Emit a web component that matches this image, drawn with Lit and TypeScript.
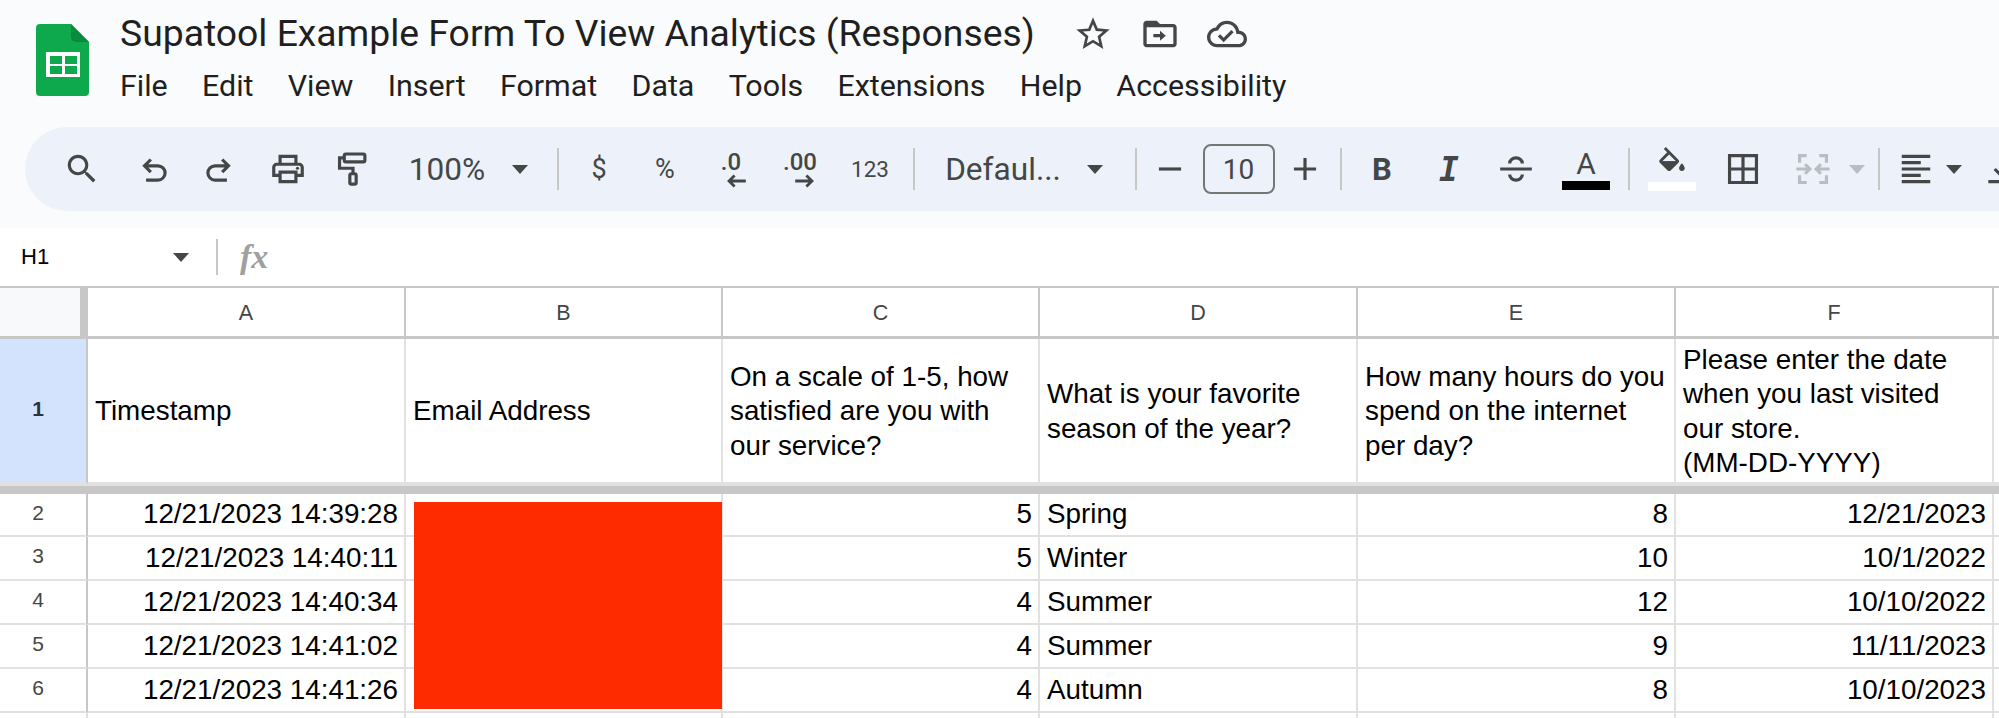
import { LitElement, html, css, svg } from 'lit';
import { customElement } from 'lit/decorators.js';

const icon = (body: unknown, cls = '') =>
  html`<svg class="icon ${cls}" viewBox="0 0 24 24">${body}</svg>`;

const ICONS: Record<string, unknown> = {
  search: svg`<path fill="currentColor" d="M15.5 14h-.79l-.28-.27C15.41 12.59 16 11.11 16 9.5 16 5.91 13.09 3 9.5 3S3 5.91 3 9.5 5.91 16 9.5 16c1.61 0 3.09-.59 4.23-1.57l.27.28v.79l5 4.99L20.49 19l-4.99-5zm-6 0C7.01 14 5 11.99 5 9.5S7.01 5 9.5 5 14 7.01 14 9.5 11.99 14 9.5 14z"/>`,
  undo: svg`<path class="st" d="M6 10h8.5a4.5 4.5 0 0 1 0 9H7M10 6l-4 4 4 4"/>`,
  redo: svg`<path class="st" d="M18 10H9.5a4.5 4.5 0 0 0 0 9H17M14 6l4 4-4 4"/>`,
  print: svg`<path fill="currentColor" d="M19 8h-1V3H6v5H5c-1.66 0-3 1.34-3 3v6h4v4h12v-4h4v-6c0-1.66-1.34-3-3-3zM8 5h8v3H8V5zm8 12v2H8v-4h8v2zm2-2v-2H6v2H4v-4c0-.55.45-1 1-1h14c.55 0 1 .45 1 1v4h-2z"/><circle fill="currentColor" cx="18" cy="11.5" r="1"/>`,
  paint: svg`<rect class="st" x="6.5" y="2.5" width="13" height="5" rx="1"/><path class="st" d="M6.5 5H3.5v6.5H12V15"/><rect class="st" x="10" y="15" width="4" height="6.5" rx="1"/>`,
  borders: svg`<path class="st" d="M3.500 3.500h17v17h-17zM12 3.500v17M3.500 12h17"/>`,
  merge: svg`<path class="st" d="M8 3.500H3.500V8M16 3.500h4.500V8M8 20.500H3.500V16M16 20.500h4.500V16M1.500 12H10M7 9l3 3-3 3M22.500 12H14M17 9l-3 3 3 3"/>`,
  align: svg`<path class="st" d="M3 4h18M3 8h12M3 12h18M3 16h12M3 20h18"/>`,
  valign: svg`<path class="st" d="M4 20h16M12 6v10M8 12l4 4 4-4"/>`,
  strike: svg`<path class="st" d="M2 12h20M8 8.500a4 3.500 0 0 1 8 0M8 15.500a4 3.500 0 0 0 8 0"/>`,
  fill: svg`<path fill="currentColor" d="M16.56 8.94L7.62 0 6.21 1.41l2.38 2.38-5.15 5.15c-.59.59-.59 1.54 0 2.12l5.500 5.500c.29.29.68.44 1.06.44s.77-.15 1.06-.44l5.500-5.500c.59-.58.59-1.53 0-2.12zM5.210 10L10 5.210 14.790 10H5.210zM19 11.500s-2 2.170-2 3.500c0 1.100.9 2 2 2s2-.9 2-2c0-1.330-2-3.500-2-3.500z"/><path fill="currentColor" d="M5 10h10l-5 5z"/>`,
  minus: svg`<path fill="currentColor" d="M5 11h14v2H5z"/>`,
  plus: svg`<path fill="currentColor" d="M19 13h-6v6h-2v-6H5v-2h6V5h2v6h6z"/>`,
  star: svg`<path fill="currentColor" d="M22 9.240l-7.190-.62L12 2 9.190 8.630 2 9.240l5.460 4.730L5.820 21 12 17.270 18.180 21l-1.630-7.030L22 9.240zM12 15.400l-3.760 2.270 1-4.280-3.320-2.880 4.380-.38L12 6.100l1.710 4.040 4.380.38-3.320 2.880 1 4.280L12 15.400z"/>`,
  folder: svg`<path fill="currentColor" d="M20 6h-8l-2-2H4c-1.100 0-2 .9-2 2v12c0 1.100.9 2 2 2h16c1.100 0 2-.9 2-2V8c0-1.100-.9-2-2-2zm0 12H4V8h16v10z"/><path fill="currentColor" d="M12 10l3.500 3-3.500 3v-2H8v-2h4z"/>`,
  cloud: svg`<path fill="currentColor" d="M19.350 10.040C18.670 6.590 15.640 4 12 4 9.110 4 6.600 5.640 5.350 8.040 2.340 8.360 0 10.910 0 14c0 3.310 2.690 6 6 6h13c2.760 0 5-2.240 5-5 0-2.640-2.050-4.780-4.650-4.960zM19 18H6c-2.210 0-4-1.790-4-4 0-2.050 1.530-3.760 3.560-3.970l1.070-.11.5-.95C8.080 7.140 9.940 6 12 6c2.620 0 4.880 1.860 5.390 4.430l.3 1.500 1.530.11c1.560.1 2.780 1.410 2.780 2.960 0 1.650-1.350 3-3 3zm-9-3.820l-2.090-2.090L6.500 13.500 10 17l6.010-6.010-1.410-1.410z"/>`,
};

const caret = (off = false) => html`<span class="caret ${off ? 'off' : ''}"></span>`;

// c = horizontal centre of the item, w = its width; gaps between them are derived
type Tool = { c: number; w: number; view: unknown };

const rawTools: Tool[] = [
  { c: 82, w: 40, view: icon(ICONS.search) },
  { c: 154, w: 40, view: icon(ICONS.undo) },
  { c: 219, w: 40, view: icon(ICONS.redo) },
  { c: 288, w: 40, view: icon(ICONS.print) },
  { c: 353, w: 40, view: icon(ICONS.paint) },
  { c: 447, w: 90, view: html`<span class="lbl">100%</span>` },
  { c: 520, w: 20, view: caret() },
  { c: 558, w: 2, view: html`<span class="sep"></span>` },
  { c: 599, w: 30, view: html`<span class="lbl sm">$</span>` },
  { c: 665, w: 30, view: html`<span class="lbl sm">%</span>` },
  { c: 731, w: 40, view: html`<span class="dec"><b>.0</b><svg viewBox="0 0 16 10"><path class="st" d="M15 5H3M7 1L3 5l4 4"/></svg></span>` },
  { c: 800, w: 44, view: html`<span class="dec"><b>.00</b><svg viewBox="0 0 16 10"><path class="st" d="M1 5h12M9 1l4 4-4 4"/></svg></span>` },
  { c: 870, w: 44, view: html`<span class="lbl xs">123</span>` },
  { c: 914, w: 2, view: html`<span class="sep"></span>` },
  { c: 1003, w: 120, view: html`<span class="lbl">Defaul...</span>` },
  { c: 1095, w: 20, view: caret() },
  { c: 1136, w: 2, view: html`<span class="sep"></span>` },
  { c: 1170, w: 30, view: icon(ICONS.minus) },
  { c: 1238.500, w: 72, view: html`<span class="sizebox">10</span>` },
  { c: 1305, w: 30, view: icon(ICONS.plus) },
  { c: 1341, w: 2, view: html`<span class="sep"></span>` },
  { c: 1382, w: 30, view: html`<span class="bold">B</span>` },
  { c: 1449, w: 30, view: html`<span class="ital">I</span>` },
  { c: 1516, w: 40, view: icon(ICONS.strike) },
  { c: 1586, w: 48, view: html`<span class="swatch"><span class="a">A</span><i class="ink"></i></span>` },
  { c: 1629, w: 2, view: html`<span class="sep"></span>` },
  { c: 1672, w: 48, view: html`<span class="swatch">${icon(ICONS.fill, 'small')}<i class="paper"></i></span>` },
  { c: 1743, w: 40, view: icon(ICONS.borders) },
  { c: 1813, w: 40, view: icon(ICONS.merge, 'off') },
  { c: 1857, w: 20, view: caret(true) },
  { c: 1879, w: 2, view: html`<span class="sep"></span>` },
  { c: 1916, w: 40, view: icon(ICONS.align) },
  { c: 1954, w: 20, view: caret() },
  { c: 2001, w: 40, view: icon(ICONS.valign) },
];

let edge = 25;
const tools = rawTools.map((t) => {
  const ml = t.c - t.w / 2 - edge;
  edge = t.c + t.w / 2;
  return { ...t, ml };
});

const menus = ['File', 'Edit', 'View', 'Insert', 'Format', 'Data', 'Tools', 'Extensions', 'Help', 'Accessibility'];
const cols = ['A', 'B', 'C', 'D', 'E', 'F', ''];

const rows = [
  ['2', '12/21/2023 14:39:28', '5', 'Spring', '8', '12/21/2023'],
  ['3', '12/21/2023 14:40:11', '5', 'Winter', '10', '10/1/2022'],
  ['4', '12/21/2023 14:40:34', '4', 'Summer', '12', '10/10/2022'],
  ['5', '12/21/2023 14:41:02', '4', 'Summer', '9', '11/11/2023'],
  ['6', '12/21/2023 14:41:26', '4', 'Autumn', '8', '10/10/2023'],
];

@customElement('app-root')
export class AppRoot extends LitElement {
  static styles = css`
    :host {
      display: block;
      width: 1999px;
      height: 718px;
      overflow: hidden;
      background: #fff;
      font-family: 'Liberation Sans', Arial, sans-serif;
      color: #000;
    }
    .st { fill: none; stroke: currentColor; stroke-width: 2; }
    .chrome { background: #f9fbfd; height: 228px; overflow: hidden; }
    .head { display: flex; height: 127px; padding-left: 36px; box-sizing: border-box; }
    .logo { width: 53px; height: 72px; margin-top: 24px; flex: none; }
    .titles { margin-left: 31px; }
    .titlebar { display: flex; align-items: center; height: 67px; }
    .title { font: 400 37.300px/67px Roboto, sans-serif; color: #1f1f1f; white-space: nowrap; width: 953px; }
    .badges { display: flex; color: #444746; }
    .badges .icon { width: 40px; height: 40px; margin-right: 27px; }
    .menu { display: flex; gap: 34.300px; font: 400 30.400px/38px Roboto, sans-serif; color: #1f1f1f; }
    .toolbar {
      margin-left: 25px;
      height: 84px;
      width: 2100px;
      display: flex;
      align-items: center;
      background: #edf2fa;
      border-radius: 42px 0 0 42px;
      color: #444746;
    }
    .tool { flex: none; display: flex; align-items: center; justify-content: center; height: 84px; }
    .icon { width: 38px; height: 38px; flex: none; display: block; }
    .icon.small { width: 34px; height: 34px; }
    .icon.off { color: #b9bcc0; }
    .lbl { font: 400 31.600px Roboto, sans-serif; white-space: nowrap; }
    .lbl.sm { font-size: 27px; }
    .lbl.xs { font-size: 22.500px; }
    .caret { width: 0; height: 0; border: 8px solid transparent; border-top: 9px solid #444746; border-bottom: 0; }
    .caret.off { border-top-color: #b9bcc0; }
    .sep { width: 2px; height: 42px; background: #c7c7c7; }
    .dec { display: flex; flex-direction: column; align-items: center; line-height: 1; }
    .dec b { font: 500 24px/23px Roboto, sans-serif; }
    .dec svg { width: 24px; height: 14px; margin-left: 10px; }
    .sizebox {
      width: 72px;
      height: 50px;
      box-sizing: border-box;
      border: 2px solid #747775;
      border-radius: 8px;
      display: flex;
      align-items: center;
      justify-content: center;
      font: 400 28px Roboto, sans-serif;
      color: #444746;
    }
    .bold { font: 700 31px Roboto, sans-serif; }
    .ital { font: italic 700 33px 'DejaVu Sans Mono', monospace; }
    .swatch { display: flex; flex-direction: column; align-items: center; width: 48px; }
    .a { font: 400 30px/32px Roboto, sans-serif; }
    .swatch i { display: block; width: 48px; height: 9px; margin-top: 1px; }
    .ink { background: #000; }
    .paper { background: #fff; }
    .formula { display: flex; align-items: center; height: 58px; }
    .name { width: 152px; padding-left: 21px; font-size: 22px; flex: none; }
    .formula .sep { height: 36px; margin-left: 27px; width: 2px; }
    .fx { margin-left: 22px; font: italic 700 34px 'Liberation Serif', serif; color: #a0a0a0; }
    .sheet {
      position: relative;
      display: grid;
      grid-template-columns: 88px 318px 317px 317px 318px 318px 318px 5px;
      grid-template-rows: 51px 145px 10px 43px 44px 44px 44px 44px 8px;
      border-top: 2px solid #c7c7c7;
    }
    .cell {
      box-sizing: border-box;
      border-right: 2px solid #e1e1e1;
      border-bottom: 2px solid #e1e1e1;
      display: flex;
      align-items: center;
      padding: 0 7px;
      font-size: 27.800px;
      line-height: 34.500px;
      overflow: hidden;
      white-space: nowrap;
    }
    .cell.wrap { white-space: pre-line; padding-top: 2px; }
    .cell.num { justify-content: flex-end; padding-right: 6px; }
    .corner { background: #f8f9fa; border-right: 8px solid #c7c7c7; border-bottom: 3px solid #c7c7c7; }
    .colh {
      justify-content: center;
      color: #444746;
      font-size: 21.500px;
      padding-top: 2px;
      border-right-color: #c7c7c7;
      border-bottom: 3px solid #c7c7c7;
    }
    .rowh {
      justify-content: center;
      color: #444746;
      font-size: 21px;
      padding: 0 10px 3px 0;
      border-right-color: #c7c7c7;
    }
    .rowh.active { background: #d3e3fd; font-weight: 700; color: #2c3440; }
    .freeze { grid-column: 1 / -1; background: #c7c7c7; border-top: 2px solid #e1e1e1; }
    .redact { position: absolute; left: 414px; top: 214px; width: 308px; height: 207px; background: #fe2b00; }
  `;

  render() {
    const header = [
      'Timestamp',
      'Email Address',
      'On a scale of 1-5, how\nsatisfied are you with\nour service?',
      'What is your favorite\nseason of the year?',
      'How many hours do you\nspend on the internet\nper day?',
      'Please enter the date\nwhen you last visited\nour store.\n(MM-DD-YYYY)',
    ];
    return html`
      <div class="chrome">
        <div class="head">
          <svg class="logo" viewBox="0 0 53 72">
            <path fill="#0fa94d" d="M4 0H35L53 18V68a4 4 0 0 1-4 4H4a4 4 0 0 1-4-4V4a4 4 0 0 1 4-4z" />
            <path fill="#0a8a3e" d="M35 0L53 18H40a5 5 0 0 1-5-5z" />
            <path fill="#fff" d="M10 28H44V53H10z" />
            <path fill="#0fa94d" d="M14 32H26V40H14zM29 32H41V40H29zM14 42H26V50H14zM29 42H41V50H29z" />
          </svg>
          <div class="titles">
            <div class="titlebar">
              <div class="title">Supatool Example Form To View Analytics (Responses)</div>
              <div class="badges">${icon(ICONS.star)}${icon(ICONS.folder)}${icon(ICONS.cloud)}</div>
            </div>
            <div class="menu">${menus.map((m) => html`<span>${m}</span>`)}</div>
          </div>
        </div>
        <div class="toolbar">
          ${tools.map(
            (t) => html`<div class="tool" style="width:${t.w}px;margin-left:${t.ml}px">${t.view}</div>`
          )}
        </div>
      </div>
      <div class="formula">
        <div class="name">H1</div>
        <span class="caret"></span>
        <span class="sep"></span>
        <span class="fx">fx</span>
      </div>
      <div class="sheet">
        <div class="cell corner"></div>
        ${cols.map((c) => html`<div class="cell colh">${c}</div>`)}
        <div class="cell rowh active">1</div>
        ${header.map((h) => html`<div class="cell wrap">${h}</div>`)}
        <div class="cell"></div>
        <div class="freeze"></div>
        ${rows.map(
          (r) => html`
            <div class="cell rowh">${r[0]}</div>
            <div class="cell num">${r[1]}</div>
            <div class="cell"></div>
            <div class="cell num">${r[2]}</div>
            <div class="cell">${r[3]}</div>
            <div class="cell num">${r[4]}</div>
            <div class="cell num">${r[5]}</div>
            <div class="cell"></div>
          `
        )}
        ${Array.from({ length: 8 }, () => html`<div class="cell"></div>`)}
        <div class="redact"></div>
      </div>
    `;
  }
}
